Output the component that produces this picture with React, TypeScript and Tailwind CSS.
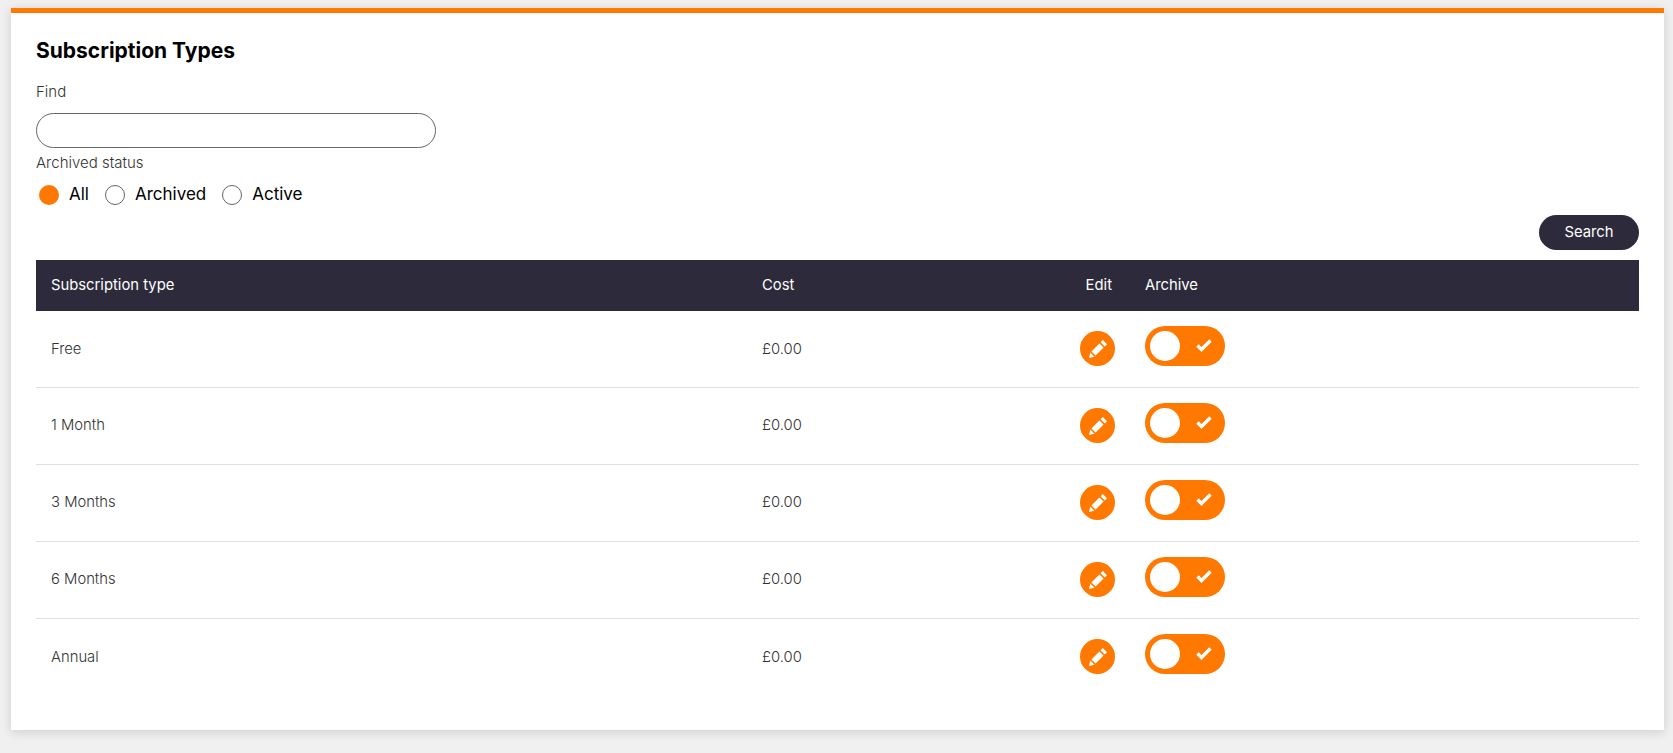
import React from 'react';

const ORANGE = 'bg-[#ff7800]';
const rows = ['Free', '1 Month', '3 Months', '6 Months', 'Annual'];

const PencilIcon = () => (
  <svg width="18" height="18" viewBox="0 0 18 18" aria-hidden="true">
    <path d="M0 18l1.3-5.5 4.2 4.2L0 18z" fill="#fff" />
    <path d="M2.4 11.4l8-8 4.2 4.2-8 8z" fill="#fff" />
    <path d="M11.6 2.2L13.8 0 18 4.2l-2.2 2.2z" fill="#fff" />
  </svg>
);

const CheckIcon = () => (
  <svg width="16" height="14" viewBox="0 0 16 14" aria-hidden="true" className="-translate-y-px">
    <path d="M1.5 7.5l4 4 9-9" fill="none" stroke="#fff" strokeWidth="3.4" />
  </svg>
);

const Radio = ({ label, checked }: { label: string; checked?: boolean }) => (
  <label className="flex items-center">
    <span
      className={`w-5 h-5 rounded-full ${checked ? ORANGE : 'bg-white border border-[#666]'}`}
    ></span>
    <span className="ml-[10px] text-[17px] text-black">{label}</span>
  </label>
);

const Toggle = () => (
  <div className={`w-20 h-10 rounded-[20px] ${ORANGE} flex items-center justify-between pl-[5px] pr-[13px]`}>
    <div className="w-[30px] h-[30px] rounded-full bg-white"></div>
    <CheckIcon />
  </div>
);

const App: React.FC = () => {
  return (
    <div className="min-h-[753px] bg-[#f0f0f0] pt-2 pl-[11px] pr-[9px] font-['Inter','Liberation_Sans',sans-serif]">
      <div className="h-[722px] bg-white border-t-[5px] border-[#ff7800] px-[25px] shadow-[0_2px_10px_rgba(0,0,0,0.15)]">
        <h2 className="pt-[25px] text-[21px] leading-[25px] font-bold text-black">Subscription Types</h2>
        <div className="mt-[19px] text-[15px] leading-5 font-light text-[#333]">Find</div>
        <input
          type="text"
          className="block mt-[11px] w-[400px] h-[35px] rounded-[18px] border border-[#666] bg-white"
        />
        <div className="mt-[5px] text-[15px] leading-5 font-light text-[#333]">Archived status</div>
        <div className="mt-[12px] ml-[3px] flex items-center gap-4 h-5">
          <Radio label="All" checked />
          <Radio label="Archived" />
          <Radio label="Active" />
        </div>
        <div className="mt-[10px] flex justify-end">
          <button
            type="button"
            className="w-[100px] h-[35px] rounded-[18px] bg-[#2d2b3b] text-white text-[14.8px]"
          >
            Search
          </button>
        </div>
        <table className="mt-[10px] w-[1603px] table-fixed border-collapse text-[14.8px]">
          <thead>
            <tr className="h-[51px] bg-[#2d2b3b] text-white text-left">
              <th className="w-[711px] pl-[15px] font-normal">Subscription type</th>
              <th className="w-[322px] pl-[15px] font-normal">Cost</th>
              <th className="w-[61px] font-normal text-right pr-[18px]">Edit</th>
              <th className="pl-[15px] font-normal">Archive</th>
            </tr>
          </thead>
          <tbody>
            {rows.map((name) => (
              <tr key={name} className="h-[77px] first:h-[76px] border-b border-[#e0e0e0] last:border-b-0 font-light text-[#333]">
                <td className="pl-[15px]">{name}</td>
                <td className="pl-[15px]">£0.00</td>
                <td className="pr-[15px]">
                  <div className="flex justify-end">
                    <button
                      type="button"
                      className={`w-[35px] h-[35px] rounded-full ${ORANGE} flex items-center justify-center`}
                      aria-label="Edit"
                    >
                      <PencilIcon />
                    </button>
                  </div>
                </td>
                <td className="pl-[15px] pb-[6px]">
                  <Toggle />
                </td>
              </tr>
            ))}
          </tbody>
        </table>
      </div>
    </div>
  );
};

export default App;
